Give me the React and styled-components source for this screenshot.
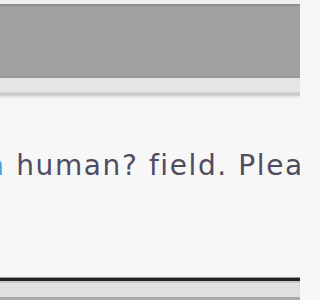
import styled, { createGlobalStyle } from "styled-components";

const Global = createGlobalStyle`
  html, body {
    margin: 0;
    padding: 0;
    background: #f7f7f7;
    overflow: hidden;
  }
  #root {
    width: 300px;
    height: 300px;
    overflow: hidden;
  }
`;

const Page = styled.div`
  display: flex;
  flex-direction: column;
  width: 300px;
  height: 300px;
  overflow: hidden;
`;

const TopBar = styled.div`
  height: 74px;
  flex-shrink: 0;
  background: #a0a0a0;
  border-top: 4px solid #efefef;
  box-shadow: inset 0 2px 0 #8f8f8f, inset 0 -2px 0 #999999;
`;

const SubBar = styled.div`
  height: 14px;
  flex-shrink: 0;
  background: #e5e5e5;
`;

const Divider = styled.div`
  height: 7px;
  flex-shrink: 0;
  background: linear-gradient(#d2d2d2 0, #c9c9c9 3px, #dedede 4px, #ececec 5px, #f3f3f3 7px);
`;

const Body = styled.div`
  flex: 1;
  min-height: 0;
  background: #f7f7f7;
  overflow: hidden;
  padding-top: 52px;
`;

const Message = styled.p`
  margin: 0 0 0 -13px;
  white-space: nowrap;
  font-family: "DejaVu Sans", Verdana, sans-serif;
  font-size: 28px;
  letter-spacing: 1.6px;
  line-height: 30px;
  color: #4f4c60;
`;

const Link = styled.a`
  color: #4aa6dc;
  text-decoration: none;
`;

const Footer = styled.div`
  height: 22px;
  flex-shrink: 0;
  background: #e0e0e0;
  border-top: 1px solid #999999;
  box-shadow: inset 0 3px 0 #222222, inset 0 5px 0 #c8c8c8, inset 0 -3px 0 #ababab;
`;

export default function App() {
  return (
    <Page>
      <Global />
      <TopBar />
      <SubBar />
      <Divider />
      <Body>
        <Message>
          <Link href="#">a</Link> human? field. Please
        </Message>
      </Body>
      <Footer />
    </Page>
  );
}
